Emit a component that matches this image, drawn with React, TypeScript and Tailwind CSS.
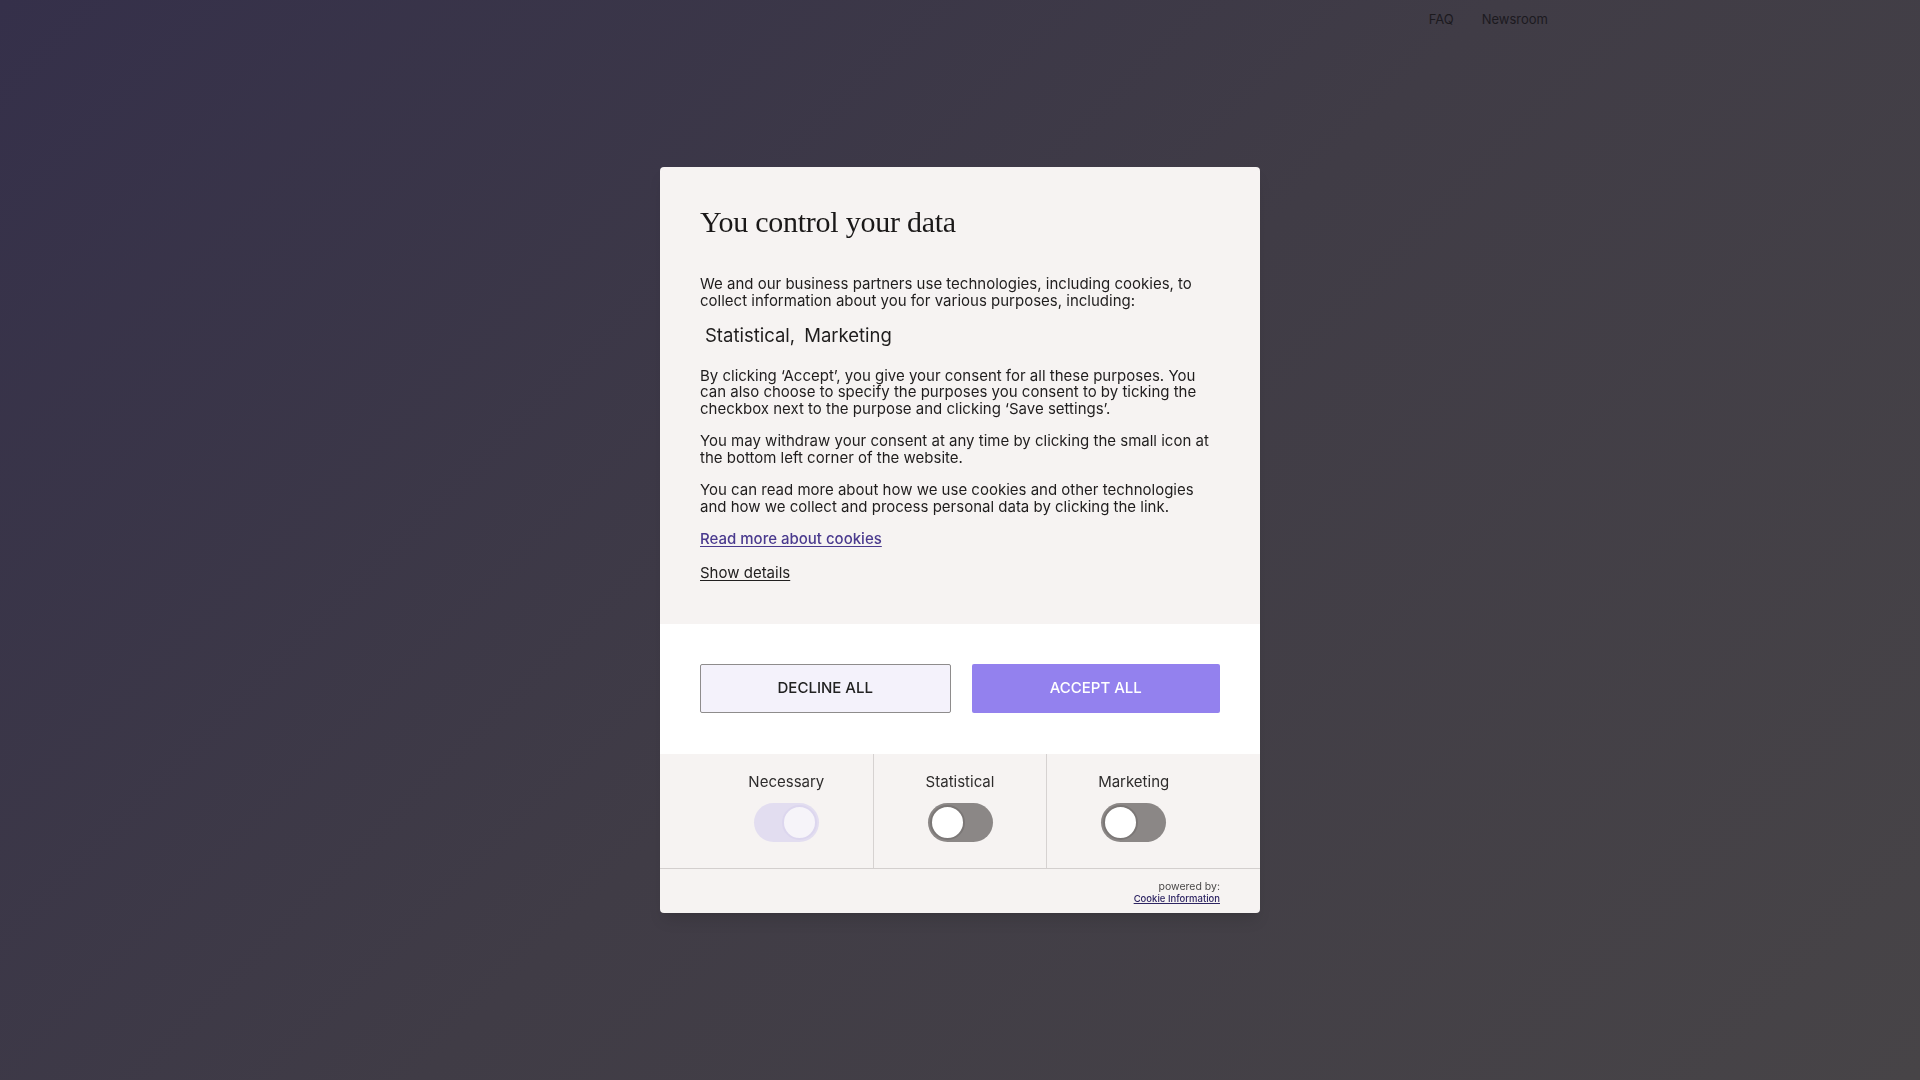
import React from 'react';

const sans = { fontFamily: 'Inter, "Noto Sans", sans-serif' };

function Toggle({ on, disabled }: { on?: boolean; disabled?: boolean }) {
  if (disabled) {
    return (
      <div className="flex h-[39px] w-[65px] items-center justify-end rounded-full bg-[#e2ddf0] px-[2px]">
        <div className="h-[35px] w-[35px] rounded-full border-2 border-[#dcd6ee] bg-[#f6f4f9]" />
      </div>
    );
  }
  return (
    <div
      className={
        on
          ? 'flex h-[39px] w-[65px] items-center justify-end rounded-full bg-[#9381ee] px-[2px]'
          : 'flex h-[39px] w-[65px] items-center justify-start rounded-full bg-[#8b8786] px-[2px]'
      }
    >
      <div className="h-[35px] w-[35px] rounded-full border-2 border-[#7b7776] bg-white" />
    </div>
  );
}

export default function App() {
  const purposes = [
    { name: 'Necessary', disabled: true },
    { name: 'Statistical' },
    { name: 'Marketing' },
  ];

  return (
    <div
      className="relative min-h-screen w-full bg-linear-135 from-[#35304a] via-[#403c46] to-[#474447]"
      style={sans}
    >
      <header className="flex h-[39px] items-center justify-end gap-[28px] pr-[372px] text-[13px] text-[#1c1a1f]">
        <a>FAQ</a>
        <a>Newsroom</a>
      </header>

      <div className="fixed inset-0 flex items-center justify-center">
        <div className="w-[600px] overflow-hidden rounded-[4px] bg-[#f6f3f2] shadow-lg">
          {/* text */}
          <div className="px-[40px] pb-[42px] pt-[37px] text-[#1f1d1d]">
            <h1
              className="text-[30px] leading-[36px] tracking-[-0.25px] text-[#1a1818]"
              style={{ fontFamily: '"Liberation Serif", "DejaVu Serif", serif' }}
            >
              You control your data
            </h1>
            <p className="mt-[36px] text-[15px] leading-[16.5px]">
              We and our business partners use technologies, including cookies, to
              <br />
              collect information about you for various purposes, including:
            </p>
            <div className="mt-[14px] text-[18.5px] leading-[24px]">
              <span className="ml-[5px]">Statistical,</span>
              <span className="ml-[9px]">Marketing</span>
            </div>
            <p className="mt-[20.5px] text-[15px] leading-[16.5px]">
              By clicking ‘Accept’, you give your consent for all these purposes. You
              <br />
              can also choose to specify the purposes you consent to by ticking the
              <br />
              checkbox next to the purpose and clicking ‘Save settings’.
            </p>
            <p className="mt-[16px] text-[15px] leading-[16.5px]">
              You may withdraw your consent at any time by clicking the small icon at
              <br />
              the bottom left corner of the website.
            </p>
            <p className="mt-[16px] text-[15px] leading-[16.5px]">
              You can read more about how we use cookies and other technologies
              <br />
              and how we collect and process personal data by clicking the link.
            </p>
            <div className="mt-[16px] text-[15px] leading-[16.5px]">
              <a className="font-medium text-[#4a3a8e] underline underline-offset-2">
                Read more about cookies
              </a>
            </div>
            <div className="mt-[17.5px] text-[15px] leading-[16.5px]">
              <a className="text-[#222020] underline underline-offset-2">Show details</a>
            </div>
          </div>

          {/* buttons */}
          <div className="flex gap-[21px] bg-white px-[40px] pb-[41px] pt-[40px]">
            <button className="h-[49px] flex-1 rounded-[2px] border border-[#8e8c8c] bg-[#f4f2fb] text-[15px] font-medium uppercase text-[#222]">
              Decline all
            </button>
            <button className="h-[49px] flex-1 rounded-[2px] bg-[#9381ee] text-[15px] font-medium uppercase text-white">
              Accept all
            </button>
          </div>

          {/* purposes */}
          <div className="flex border-b border-[#d3cfce] px-[40px]">
            {purposes.map((p, i) => (
              <div
                key={p.name}
                className={
                  i === 0
                    ? 'flex flex-1 flex-col items-center pb-[26px] pt-[20px]'
                    : 'flex flex-1 flex-col items-center border-l border-[#d6d2d1] pb-[26px] pt-[20px]'
                }
              >
                <div className="text-[15px] leading-[16.5px] text-[#2e2c2c]">{p.name}</div>
                <div className="mt-[13px]">
                  <Toggle disabled={p.disabled} />
                </div>
              </div>
            ))}
          </div>

          {/* footer */}
          <div className="flex flex-col items-end px-[40px] pb-[8px] pt-[12px]">
            <div className="text-[10.5px] leading-[12px] text-[#4a4848]">powered by:</div>
            <a className="text-[9.5px] font-medium leading-[12px] text-[#2e2563] underline">
              Cookie Information
            </a>
          </div>
        </div>
      </div>
    </div>
  );
}
